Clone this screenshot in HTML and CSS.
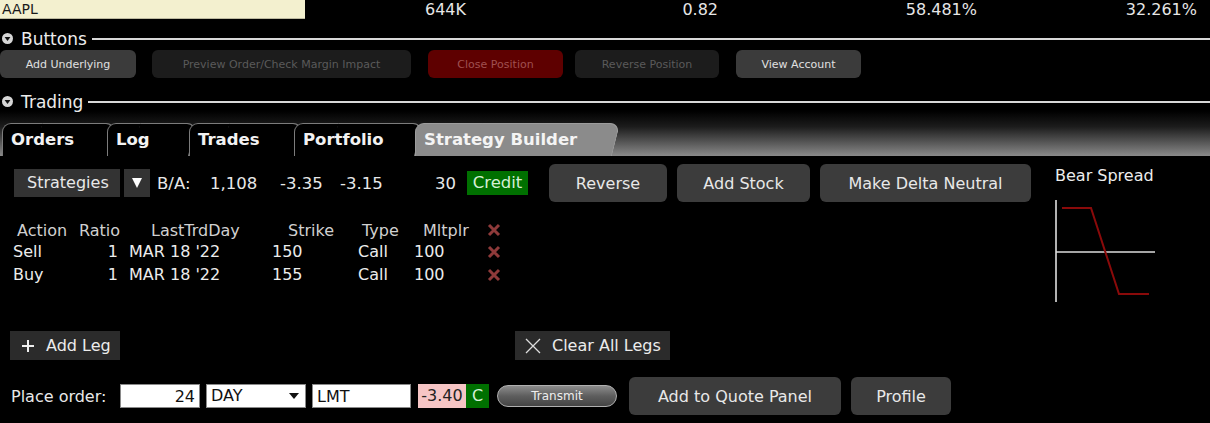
FILE: index.html
```html
<!DOCTYPE html>
<html>
<head>
<meta charset="utf-8">
<title>Strategy Builder</title>
<link rel="stylesheet" href="styles.css">
</head>
<body>
<div class="quote">
  <div class="sym">AAPL</div>
  <div class="qv">644K</div>
  <div class="qv">0.82</div>
  <div class="qv">58.481%</div>
  <div class="qv">32.261%</div>
</div>

<div class="section">
  <svg class="twisty" width="11" height="11" viewBox="0 0 11 11"><circle cx="5.5" cy="5.5" r="5.5" fill="#d6d6d6"/><path d="M2.6 4 L8.4 4 L5.5 8 Z" fill="#111"/></svg>
  <span>Buttons</span>
  <i class="rule"></i>
</div>
<div class="toolbar">
  <div class="tb w-under">Add Underlying</div>
  <div class="tb tb-off w-preview">Preview Order/Check Margin Impact</div>
  <div class="tb tb-close w-close">Close Position</div>
  <div class="tb tb-off w-rev">Reverse Position</div>
  <div class="tb w-acct">View Account</div>
</div>

<div class="section section-trading">
  <svg class="twisty" width="11" height="11" viewBox="0 0 11 11"><circle cx="5.5" cy="5.5" r="5.5" fill="#d6d6d6"/><path d="M2.6 4 L8.4 4 L5.5 8 Z" fill="#111"/></svg>
  <span>Trading</span>
  <i class="rule"></i>
</div>
<div class="tabbar">
  <div class="tab t-orders">Orders</div>
  <div class="tab t-log">Log</div>
  <div class="tab t-trades">Trades</div>
  <div class="tab t-port">Portfolio</div>
  <div class="tab tab-on t-strat">Strategy Builder</div>
</div>

<div class="builder">
  <div class="main">
    <div class="strat-row">
      <div class="strat-btn">Strategies</div>
      <div class="caret-btn"><svg width="12" height="12" viewBox="0 0 12 12"><path d="M1 1 L11 1 L6 11 Z" fill="#fff"/></svg></div>
      <span class="ba">B/A:</span>
      <span class="ba-size">1,108</span>
      <span class="ba-bid">-3.35</span>
      <span class="ba-ask">-3.15</span>
      <span class="ba-qty">30</span>
      <span class="credit">Credit</span>
      <div class="sbtn w-reverse">Reverse</div>
      <div class="sbtn w-stock">Add Stock</div>
      <div class="sbtn w-delta">Make Delta Neutral</div>
    </div>

    <div class="legs">
      <div class="leg-head">
        <span class="c-act">Action</span>
        <span class="c-ratio">Ratio</span>
        <span class="c-day">LastTrdDay</span>
        <span class="c-strike">Strike</span>
        <span class="c-type">Type</span>
        <span class="c-mult">Mltplr</span>
        <span class="c-del"><svg width="14" height="14" viewBox="0 0 14 14"><path d="M2 2 L12 12 M12 2 L2 12" stroke="#8e3a3a" stroke-width="3"/></svg></span>
      </div>
      <div class="leg-row">
        <span class="c-act">Sell</span>
        <span class="c-ratio">1</span>
        <span class="c-day">MAR 18 '22</span>
        <span class="c-strike">150</span>
        <span class="c-type">Call</span>
        <span class="c-mult">100</span>
        <span class="c-del"><svg width="14" height="14" viewBox="0 0 14 14"><path d="M2 2 L12 12 M12 2 L2 12" stroke="#8e3a3a" stroke-width="3"/></svg></span>
      </div>
      <div class="leg-row">
        <span class="c-act">Buy</span>
        <span class="c-ratio">1</span>
        <span class="c-day">MAR 18 '22</span>
        <span class="c-strike">155</span>
        <span class="c-type">Call</span>
        <span class="c-mult">100</span>
        <span class="c-del"><svg width="14" height="14" viewBox="0 0 14 14"><path d="M2 2 L12 12 M12 2 L2 12" stroke="#8e3a3a" stroke-width="3"/></svg></span>
      </div>
    </div>
  </div>

  <div class="payoff">
    <div class="payoff-title">Bear Spread</div>
    <svg class="payoff-chart" width="106" height="106" viewBox="0 0 106 106">
      <line x1="3" y1="2" x2="3" y2="104" stroke="#eee" stroke-width="1.5"/>
      <line x1="3" y1="54" x2="102" y2="54" stroke="#ddd" stroke-width="1.5"/>
      <polyline points="9,10 38,10 66,96 96,96" fill="none" stroke="#8a0a0a" stroke-width="2"/>
    </svg>
  </div>
</div>

<div class="leg-actions">
  <div class="lbtn w-addleg"><svg width="12" height="12" viewBox="0 0 12 12"><path d="M6 0 V12 M0 6 H12" stroke="#eee" stroke-width="2"/></svg>Add Leg</div>
  <div class="lbtn w-clear"><svg width="16" height="16" viewBox="0 0 16 16"><path d="M1 1 L15 15 M15 1 L1 15" stroke="#ddd" stroke-width="1.3"/></svg>Clear All Legs</div>
</div>

<div class="order-row">
  <span class="order-label">Place order:</span>
  <div class="field f-qty">24</div>
  <div class="field f-tif">DAY<svg width="10" height="6" viewBox="0 0 10 6"><path d="M0 0 H10 L5 6 Z" fill="#111"/></svg></div>
  <div class="field f-type">LMT</div>
  <div class="price">-3.40</div>
  <div class="price-c">C</div>
  <div class="transmit">Transmit</div>
  <div class="sbtn w-quote">Add to Quote Panel</div>
  <div class="sbtn w-profile">Profile</div>
</div>
</body>
</html>
```

FILE: styles.css
```css
html,body{margin:0;padding:0;}
body{width:1210px;height:423px;overflow:hidden;background:#000;color:#e8e8e8;font-family:"DejaVu Sans","Liberation Sans",sans-serif;font-size:16px;}

/* quote line */
.quote{display:grid;grid-template-columns:305px 161px 252px 259px 220px;height:19px;align-items:center;}
.sym{height:19px;line-height:19px;background:#f3f0cf;color:#1a1a1a;font-size:14px;padding-left:2px;box-sizing:border-box;border-bottom:1px solid #bdbaa0;}
.qv{text-align:right;color:#e6e6e6;}

/* collapsible section headers */
.section{display:flex;align-items:center;height:19px;margin-top:10px;padding-left:2px;font-size:17px;color:#ececec;}
.section-trading{margin-top:14px;}
.twisty{margin-right:8px;flex:none;}
.rule{flex:1;margin-left:5px;border-top:2px solid #d8d8d8;height:0;}

/* button strip */
.toolbar{display:flex;height:28px;margin-top:2px;}
.tb{display:flex;align-items:center;justify-content:center;border-radius:6px;background:#3b3b3b;color:#e0e0e0;font-size:11px;}
.tb-off{background:#1c1c1c;color:#5a5a5a;}
.tb-close{background:#5e0000;color:#a05050;}
.w-under{width:136px;}
.w-preview{width:259px;margin-left:16px;}
.w-close{width:135px;margin-left:17px;}
.w-rev{width:144px;margin-left:12px;}
.w-acct{width:125px;margin-left:17px;}

/* tabs */
.tabbar{display:flex;align-items:flex-end;height:45px;padding-left:2px;background:linear-gradient(to bottom,#000 0%,#1c1c1c 35%,#8a8a8a 100%);}
.tab{position:relative;z-index:0;height:33px;line-height:33px;padding-left:9px;box-sizing:border-box;font-weight:bold;font-size:16.5px;color:#f2f2f2;}
.tab::before{content:"";position:absolute;left:0;top:0;bottom:0;width:60%;background:#000;border:1px solid #7c7c7c;border-right:0;border-bottom:0;border-radius:9px 0 0 0;z-index:-1;}
.tab::after{content:"";position:absolute;left:30%;right:0;top:0;bottom:0;background:#000;border:1px solid #7c7c7c;border-left:0;border-bottom:0;border-radius:0 10px 0 0;transform:skewX(-14deg);transform-origin:100% 100%;z-index:-1;}
.tab-on{color:#f4f4f4;}
.tab-on::before,.tab-on::after{background:#8b8b8b;border-color:#9c9c9c;}
.t-orders{width:105px;}
.t-log{width:82px;}
.t-trades{width:105px;}
.t-port{width:121px;}
.t-strat{width:197px;}

/* strategy builder body */
.builder{display:flex;height:175px;padding-top:8px;box-sizing:border-box;}
.main{width:1053px;flex:none;}
.strat-row{display:flex;align-items:center;height:38px;padding-left:14px;}
.strat-btn{width:106px;height:28px;line-height:28px;padding-left:13px;box-sizing:border-box;background:#333;}
.caret-btn{width:26px;height:28px;margin-left:4px;background:#333;display:flex;align-items:center;justify-content:center;}
.ba{width:53px;margin-left:7px;font-size:16.5px;}
.ba-size{width:70px;font-size:16.5px;}
.ba-bid{width:60px;font-size:16.5px;}
.ba-ask{width:78px;font-size:16.5px;}
.ba-qty{width:38px;text-align:right;font-size:16.5px;}
.credit{margin-left:11px;width:61px;height:24px;line-height:24px;text-align:center;background:#007000;color:#d6efd6;font-size:16.5px;}
.sbtn{display:flex;align-items:center;justify-content:center;height:38px;border-radius:6px;background:#3c3c3c;color:#e8e8e8;}
.w-reverse{width:118px;margin-left:21px;}
.w-stock{width:133px;margin-left:10px;}
.w-delta{width:211px;margin-left:10px;}

/* leg table */
.legs{margin-top:18px;padding-left:13px;}
.leg-head,.leg-row{display:grid;grid-template-columns:60px 50px 142px 80px 60px 75px 30px;align-items:center;}
.leg-head{height:20px;color:#d0d0d0;}
.leg-row{height:23px;color:#ececec;}
.c-del{display:flex;align-items:center;padding-left:7px;}
.leg-head .c-act{padding-left:4px;}
.leg-head .c-ratio{padding-left:6px;}
.leg-head .c-day{padding-left:28px;}
.leg-head .c-strike{padding-left:23px;}
.leg-head .c-type{padding-left:17px;}
.leg-head .c-mult{padding-left:18px;}
.leg-row .c-ratio{text-align:right;padding-right:5px;}
.leg-row .c-day{padding-left:6px;}
.leg-row .c-strike{padding-left:7px;}
.leg-row .c-type{padding-left:13px;}
.leg-row .c-mult{padding-left:9px;}

/* payoff diagram */
.payoff{flex:1;}
.payoff-title{height:24px;line-height:24px;padding-left:2px;color:#ececec;}
.payoff-chart{display:block;margin-top:10px;}

/* add / clear legs */
.leg-actions{display:flex;height:29px;padding-left:10px;}
.lbtn{display:flex;align-items:center;height:29px;background:#2b2b2b;color:#ececec;box-sizing:border-box;}
.lbtn svg{margin-right:12px;}
.w-addleg{width:110px;padding-left:12px;}
.w-clear{width:155px;margin-left:395px;padding-left:10px;}
.w-clear svg{margin-right:11px;}

/* order entry line */
.order-row{display:flex;align-items:center;height:38px;margin-top:17px;padding-left:11px;}
.order-label{width:109px;flex:none;}
.field{height:24px;line-height:24px;background:#fff;color:#111;border:1px solid #8a8a8a;box-sizing:border-box;padding:0 4px;}
.f-qty{width:80px;text-align:right;}
.f-tif{width:100px;margin-left:6px;display:flex;align-items:center;justify-content:space-between;padding-right:6px;}
.f-type{width:99px;margin-left:6px;}
.price{width:48px;height:24px;line-height:24px;margin-left:7px;background:#f6c5c5;color:#222;text-align:center;}
.price-c{width:23px;height:24px;line-height:24px;background:#007000;color:#d6efd6;text-align:center;}
.transmit{width:120px;height:22px;line-height:20px;margin-left:8px;box-sizing:border-box;border:1px solid #b0b0b0;border-radius:11px;background:linear-gradient(to bottom,#8c8c8c 0%,#5e5e5e 50%,#444 100%);color:#eee;font-size:12px;text-align:center;}
.w-quote{width:212px;margin-left:12px;}
.w-profile{width:100px;margin-left:10px;}
```
